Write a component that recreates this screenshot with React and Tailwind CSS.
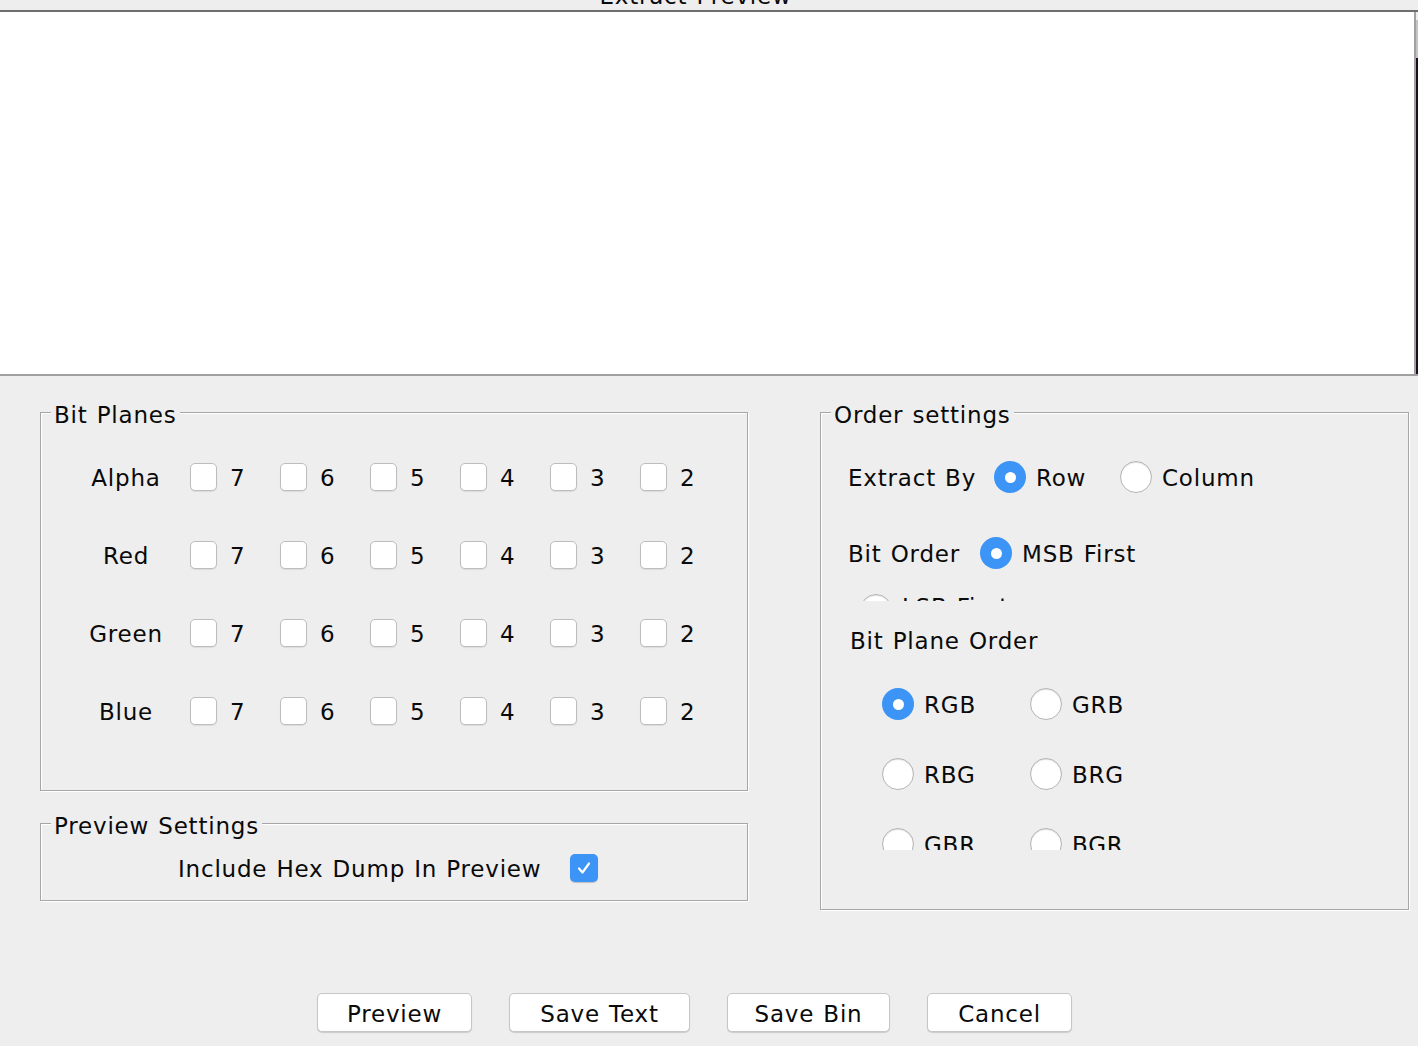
import React from "react";

const txt = "text-[23px] tracking-[0.8px] [word-spacing:1px] text-[#0a0a0a]";
const lbl = txt + " pt-[3px]";

function Check({ checked }) {
  if (checked) {
    return (
      <div className="w-[28px] h-[28px] rounded-[5px] bg-[#3b94f6] flex items-center justify-center shadow-[0_1px_1px_rgba(0,0,0,0.2)]">
        <svg width="18" height="18" viewBox="0 0 18 18" fill="none">
          <path d="M4 9.5 L7.5 13.5 L14 4.5" stroke="#fff" strokeWidth="2.2" strokeLinecap="round" strokeLinejoin="round" />
        </svg>
      </div>
    );
  }
  return (
    <div className="w-[27px] h-[28px] rounded-[5px] bg-white border border-[#bdbdbd] shadow-[0_1px_1px_rgba(0,0,0,0.08)]" />
  );
}

function Radio({ checked }) {
  if (checked) {
    return (
      <div className="w-[32px] h-[32px] rounded-full bg-[#3b94f6] flex items-center justify-center shrink-0">
        <div className="w-[11px] h-[11px] rounded-full bg-white" />
      </div>
    );
  }
  return (
    <div className="w-[32px] h-[32px] rounded-full bg-white border border-[#b4b4b4] shadow-[inset_0_1px_1px_rgba(0,0,0,0.12)] shrink-0" />
  );
}

function RadioItem({ checked, label, w }) {
  return (
    <div className="flex items-center gap-[10px] shrink-0" style={w ? { width: w } : undefined}>
      <Radio checked={checked} />
      <span className={lbl}>{label}</span>
    </div>
  );
}

const fs = "border border-[#a6a6a6] shadow-[1px_1px_0_#fff,inset_1px_1px_0_#fff] m-0 p-0 min-w-0";
const lg = "ml-[10px] px-[3px] pt-[6px] bg-[#eeeeee] leading-[26px] " + txt;

export default function App() {
  const rows = ["Alpha", "Red", "Green", "Blue"];
  const bits = ["7", "6", "5", "4", "3", "2"];
  const buttons = [
    ["Preview", "w-[155px]"],
    ["Save Text", "w-[181px]"],
    ["Save Bin", "w-[163px]"],
    ["Cancel", "w-[145px]"],
  ];
  return (
    <div className="w-[1418px] h-[1046px] bg-[#eeeeee] flex flex-col overflow-hidden font-['DejaVu_Sans',sans-serif]">
      {/* title strip */}
      <div className="h-[10px] overflow-hidden flex justify-center pr-[27px]">
        <div className={"mt-[-17px] leading-[26px] " + txt}>Extract Preview</div>
      </div>
      <div className="h-[2px] bg-[#6e6e6e]" />
      {/* preview text area */}
      <div className="h-[362px] flex">
        <div className="flex-1 bg-white" />
        <div className="w-[2px] bg-[#a2a2a2]" />
        <div className="w-[2px] flex flex-col">
          <div className="h-[8px] bg-[#eeeeee]" />
          <div className="h-[38px] bg-[#c4c4c4]" />
          <div className="flex-1 bg-[#1c0d1c]" />
        </div>
      </div>
      <div className="h-[2px] bg-[#a0a0a0]" />

      {/* settings */}
      <div className="h-[535px] flex pl-[40px] pt-[20px]">
        <div className="flex flex-col w-[708px]">
          <fieldset className={fs}>
            <legend className={lg}>Bit Planes</legend>
            <div className="pl-[35px] pt-[10px] pb-[40px]">
              {rows.map((r) => (
                <div key={r} className="h-[78px] flex items-center">
                  <div className={"w-[114px] text-center pr-[14px] " + lbl}>{r}</div>
                  {bits.map((b) => (
                    <div key={b} className="w-[90px] flex items-center gap-[13px]">
                      <Check />
                      <span className={lbl}>{b}</span>
                    </div>
                  ))}
                </div>
              ))}
            </div>
          </fieldset>
          <fieldset className={fs + " mt-[16px]"}>
            <legend className={lg}>Preview Settings</legend>
            <div className="pl-[137px] pt-[9px] pb-[12px]">
              <div className="h-[40px] flex items-center">
                <span className={"w-[392px] shrink-0 " + lbl}>Include Hex Dump In Preview</span>
                <Check checked />
              </div>
            </div>
          </fieldset>
        </div>

        <fieldset className={fs + " ml-[72px] w-[589px] self-start"}>
          <legend className={lg}>Order settings</legend>
          <div className="pl-[27px] pt-[29px] pb-[59px]">
            <div className="h-[40px] flex items-center">
              <span className={"w-[146px] shrink-0 " + lbl}>Extract By</span>
              <RadioItem checked label="Row" w="126px" />
              <RadioItem label="Column" />
            </div>
            <div className="mt-[36px] h-[68px] overflow-hidden flex flex-col">
              <div className="h-[40px] shrink-0 flex items-center">
                <span className={"w-[132px] shrink-0 " + lbl}>Bit Order</span>
                <RadioItem checked label="MSB First" />
              </div>
              <div className="mt-[21px] pl-[12px] shrink-0 flex items-start gap-[10px]">
                <Radio />
                <span className={"leading-[26px] " + txt}>LSB First</span>
              </div>
            </div>
            <div className={"mt-[27px] ml-[2px] leading-[26px] " + txt}>Bit Plane Order</div>
            <div className="mt-[15px] h-[181px] overflow-hidden pl-[34px]">
              {[["RGB", "GRB"], ["RBG", "BRG"], ["GBR", "BGR"]].map((pair, i) => (
                <div key={i} className="h-[70px] flex items-center shrink-0">
                  <RadioItem checked={i === 0} label={pair[0]} w="148px" />
                  <RadioItem label={pair[1]} />
                </div>
              ))}
            </div>
          </div>
        </fieldset>
      </div>

      {/* buttons */}
      <div className="mt-[82px] flex justify-center gap-[37px] pr-[29px]">
        {buttons.map(([b, w]) => (
          <div
            key={b}
            className={w + " h-[39px] bg-white border border-[#c6c6c6] rounded-[5px] shadow-[0_1px_1px_rgba(0,0,0,0.15)] flex items-center justify-center " + lbl}
          >
            {b}
          </div>
        ))}
      </div>
    </div>
  );
}
